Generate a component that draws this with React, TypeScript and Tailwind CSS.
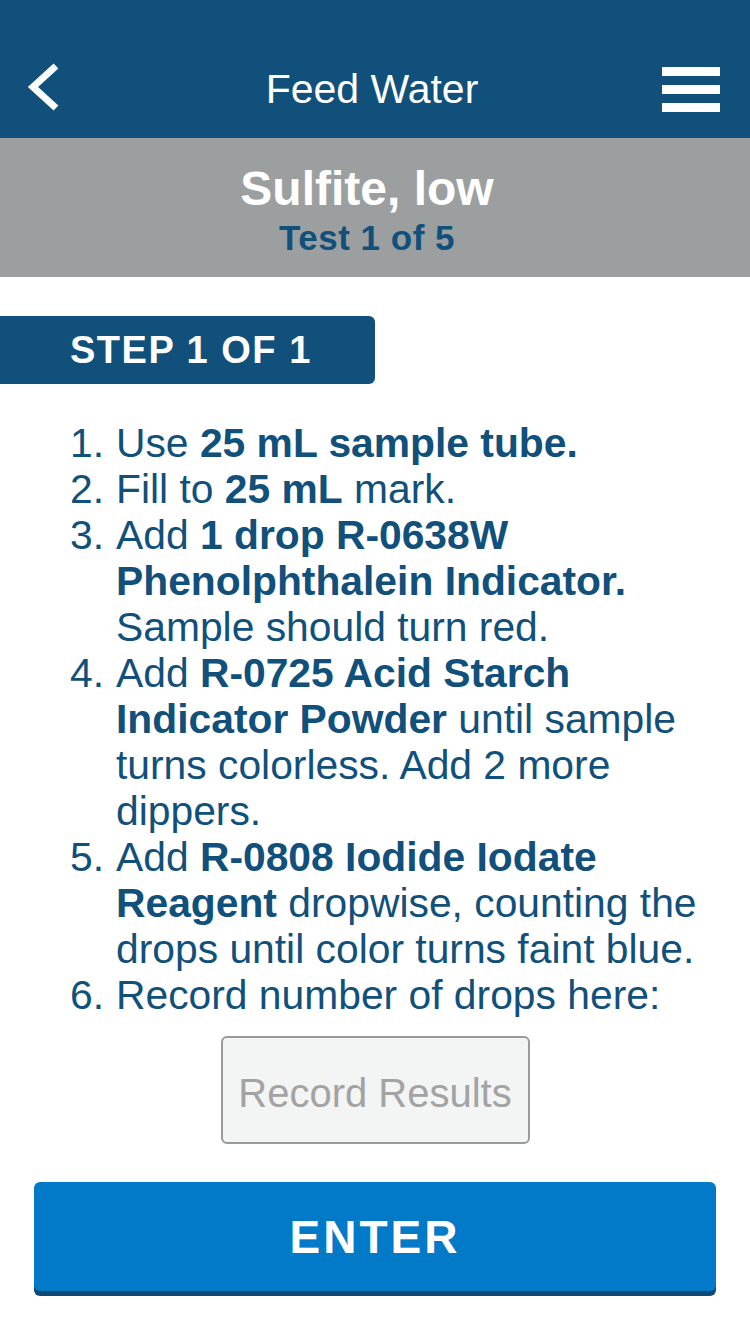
import React from "react";

const B = ({ children }: { children: React.ReactNode }) => (
  <span className="font-bold">{children}</span>
);

function Item({ n, children }: { n: string; children: React.ReactNode }) {
  return (
    <li className="flex">
      <span className="w-[46px] shrink-0">{n}</span>
      <span className="flex-1">{children}</span>
    </li>
  );
}

export default function App() {
  return (
    <div className="w-[750px] min-h-[1334px] bg-white font-['Liberation_Sans',Arial,sans-serif]">
      <header className="h-[138px] bg-[#10507a] pt-[40px]">
        <div className="h-[98px] grid grid-cols-[1fr_auto_1fr] items-center pl-[24px] pr-[30px]">
          <svg width="40" height="50" viewBox="0 0 40 50" className="block -mt-[4px]">
            <polyline
              points="32,4 9,25 32,46"
              fill="none"
              stroke="white"
              strokeWidth="7"
              strokeLinecap="butt"
              strokeLinejoin="miter"
            />
          </svg>
          <h1 className="text-white text-[41px] leading-none">Feed Water</h1>
          <div className="flex flex-col gap-[9px] w-[58px] justify-self-end">
            <div className="h-[9px] bg-white" />
            <div className="h-[9px] bg-white" />
            <div className="h-[9px] bg-white" />
          </div>
        </div>
      </header>

      <section className="h-[139px] bg-[#9c9fa0] flex flex-col items-center pt-[27px] pr-[16px]">
        <div className="text-white font-bold text-[48px] leading-none">Sulfite, low</div>
        <div className="text-[#10507a] font-bold text-[35px] leading-none mt-[7px] tracking-[0.5px]">
          Test 1 of 5
        </div>
      </section>

      <div className="mt-[39px] w-[375px] h-[68px] bg-[#10507a] rounded-r-[6px] flex items-center pl-[70px]">
        <span className="text-white font-bold text-[38px] leading-none tracking-[1.5px]">
          STEP 1 OF 1
        </span>
      </div>

      <ol className="mt-[36px] pl-[70px] pr-[26px] text-[#10507a] text-[40.8px] leading-[46px]">
        <Item n="1.">
          Use <B>25 mL sample tube.</B>
        </Item>
        <Item n="2.">
          Fill to <B>25 mL</B> mark.
        </Item>
        <Item n="3.">
          Add <B>1 drop R-0638W Phenolphthalein Indicator.</B>
          <br />
          Sample should turn red.
        </Item>
        <Item n="4.">
          Add <B>R-0725 Acid Starch Indicator Powder</B> until sample turns colorless. Add 2 more dippers.
        </Item>
        <Item n="5.">
          Add <B>R-0808 Iodide Iodate Reagent</B> dropwise, counting the drops until color turns faint blue.
        </Item>
        <Item n="6.">Record number of drops here:</Item>
      </ol>

      <div className="mt-[18px] flex justify-center">
        <div className="w-[309px] h-[108px] border-2 border-[#9a9a9a] rounded-[6px] bg-[#f3f4f4] flex items-center justify-center pt-[6px]">
          <span className="text-[#a3a3a3] text-[40px] leading-none">Record Results</span>
        </div>
      </div>

      <div className="mt-[38px] mx-[34px]">
        <button className="w-full h-[109px] bg-[#027ac8] rounded-[6px] shadow-[0_5px_0_#0b4a77] flex items-center justify-center">
          <span className="text-white font-bold text-[46px] leading-none tracking-[3px]">ENTER</span>
        </button>
      </div>
    </div>
  );
}
